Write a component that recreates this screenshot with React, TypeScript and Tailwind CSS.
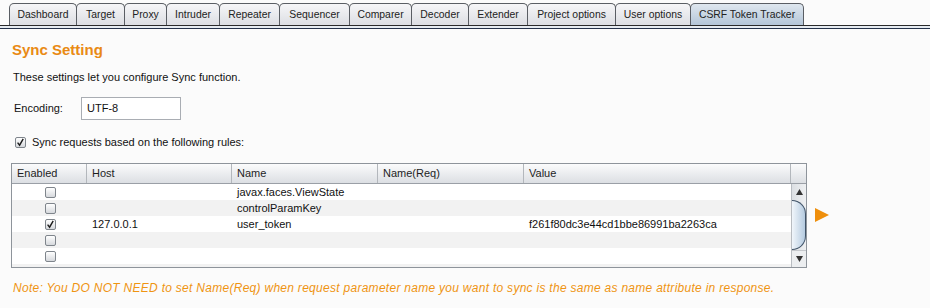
import React from 'react';

// ─── Tabs ─────────────────────────────────────────────────────
const TABS: { label: string; w: number }[] = [
  { label: 'Dashboard', w: 68 },
  { label: 'Target', w: 49 },
  { label: 'Proxy', w: 43 },
  { label: 'Intruder', w: 54 },
  { label: 'Repeater', w: 61 },
  { label: 'Sequencer', w: 71 },
  { label: 'Comparer', w: 63 },
  { label: 'Decoder', w: 58 },
  { label: 'Extender', w: 60 },
  { label: 'Project options', w: 89 },
  { label: 'User options', w: 76 },
  { label: 'CSRF Token Tracker', w: 114 },
];

// ─── Table data ───────────────────────────────────────────────
interface Rule {
  enabled: boolean;
  host: string;
  name: string;
  nameReq: string;
  value: string;
}

const RULES: Rule[] = [
  { enabled: false, host: '', name: 'javax.faces.ViewState', nameReq: '', value: '' },
  { enabled: false, host: '', name: 'controlParamKey', nameReq: '', value: '' },
  { enabled: true, host: '127.0.0.1', name: 'user_token', nameReq: '', value: 'f261f80dc3e44cd1bbe86991ba2263ca' },
  { enabled: false, host: '', name: '', nameReq: '', value: '' },
  { enabled: false, host: '', name: '', nameReq: '', value: '' },
  { enabled: false, host: '', name: '', nameReq: '', value: '' },
];

const COLS = [
  { label: 'Enabled', w: 'w-[75px]' },
  { label: 'Host', w: 'w-[145px]' },
  { label: 'Name', w: 'w-[146px]' },
  { label: 'Name(Req)', w: 'w-[146px]' },
  { label: 'Value', w: 'w-[267px]' },
];

const Check: React.FC<{ checked?: boolean }> = ({ checked }) => (
  <span className="relative inline-block w-[11px] h-[11px] rounded-[2px] border border-[#7f858c] bg-gradient-to-b from-[#ffffff] to-[#d6d9dd]">
    {checked && (
      <svg viewBox="0 0 11 11" className="absolute -left-px -top-px w-[11px] h-[11px]">
        <path d="M2.6 5.6 L4.6 8.2 L8.2 1.8" fill="none" stroke="#1b1b1b" strokeWidth="1.4" />
      </svg>
    )}
  </span>
);

export default function App() {
  return (
    <div className="w-[930px] h-[308px] overflow-hidden bg-[#fbfbfb] text-[#111] font-['Liberation_Sans',Arial,sans-serif]">
      {/* Tab strip */}
      <div className="flex items-end h-[26px] pl-[9px] border-b border-[#2a2a2a]">
        {TABS.map((t, i) => {
          const active = i === TABS.length - 1;
          return (
            <div
              key={t.label}
              style={{ width: t.w }}
              className={`h-[22px] flex items-center justify-center text-[10.4px] text-[#222] border border-b-0 border-[#5a5e64] rounded-t-[5px] ${
                i > 0 ? '-ml-px' : ''
              } ${
                active
                  ? 'bg-gradient-to-b from-[#dfe7ef] to-[#b4c6d8]'
                  : 'bg-gradient-to-b from-[#f6f6f8] to-[#dcdee3]'
              }`}
            >
              {t.label}
            </div>
          );
        })}
      </div>
      <div className="h-[2px] bg-[#e6ecf2]" />
      <div className="h-px bg-[#24324a]" />

      {/* Content */}
      <div className="pl-[11px]">
        <div className="mt-[12px] pl-px text-[15px] leading-[18px] font-bold text-[#e98a14]">Sync Setting</div>
        <div className="mt-[11px] pl-[2px] text-[11px] leading-[14px]">These settings let you configure Sync function.</div>

        <div className="mt-[13px] flex items-start pl-[3px]">
          <span className="w-[67px] pt-[4px] text-[11px] leading-[14px]">Encoding:</span>
          <div className="w-[100px] h-[23px] bg-white border border-[#a9adb3] flex items-center pl-[5px] text-[11px]">
            UTF-8
          </div>
        </div>

        <div className="mt-[15px] flex items-center gap-[6px] pl-[4px] h-[14px] text-[11px]">
          <Check checked />
          <span>Sync requests based on the following rules:</span>
        </div>

        {/* Rules table */}
        <div className="mt-[14px] flex items-start">
          <div className="w-[796px] border border-[#8e949b] bg-white text-[11px]">
            <div className="flex h-[20px] border-b border-[#9a9fa6] bg-gradient-to-b from-[#fbfbfc] to-[#dcdfe3]">
              {COLS.map((c) => (
                <div key={c.label} className={`${c.w} h-full flex items-center pl-[5px] border-r border-[#b3b7bc] text-[#1e1e1e]`}>
                  {c.label}
                </div>
              ))}
              <div className="w-[15px]" />
            </div>
            <div className="flex h-[83px] overflow-hidden">
              <div className="w-[779px]">
                {RULES.map((r, i) => (
                  <div key={i} className={`flex h-[16px] items-center ${i % 2 ? 'bg-[#f2f2f2]' : 'bg-white'}`}>
                    <div className="w-[75px] flex justify-center pl-[2px]">
                      <Check checked={r.enabled} />
                    </div>
                    <div className="w-[145px] pl-[5px]">{r.host}</div>
                    <div className="w-[146px] pl-[5px]">{r.name}</div>
                    <div className="w-[146px] pl-[5px]">{r.nameReq}</div>
                    <div className="w-[267px] pl-[5px]">{r.value}</div>
                  </div>
                ))}
              </div>
              {/* Scrollbar */}
              <div className="w-[15px] h-full flex flex-col border-l border-[#b8bcc1] bg-gradient-to-r from-[#dcdfe3] to-[#eef0f2]">
                <div className="h-[16px] flex items-center justify-center">
                  <svg viewBox="0 0 7 6" className="w-[7px] h-[6px]"><path d="M3.5 0 L7 6 L0 6 Z" fill="#333" /></svg>
                </div>
                <div className="h-[50px] rounded-r-full border border-l-0 border-[#3f5267] bg-gradient-to-r from-[#f1f6fb] to-[#b5cbe0]" />
                <div className="flex-1 bg-gradient-to-b from-[#e0e2e5] to-[#a9adb2]" />
                <div className="h-[16px] flex items-center justify-center bg-[#eceef0]">
                  <svg viewBox="0 0 7 6" className="w-[7px] h-[6px]"><path d="M0 0 L7 0 L3.5 6 Z" fill="#333" /></svg>
                </div>
              </div>
            </div>
          </div>
          <svg viewBox="0 0 14 14" className="ml-[8px] mt-[45px] w-[14px] h-[14px]">
            <path d="M0 0 L14 7 L0 14 Z" fill="#ef8f0c" />
          </svg>
        </div>

        <div className="mt-[12px] pl-[2px] text-[12px] leading-[16px] italic tracking-[0.28px] text-[#ef9412]">
          Note: You DO NOT NEED to set Name(Req) when request parameter name you want to sync is the same as name attribute in response.
        </div>
      </div>
    </div>
  );
}
